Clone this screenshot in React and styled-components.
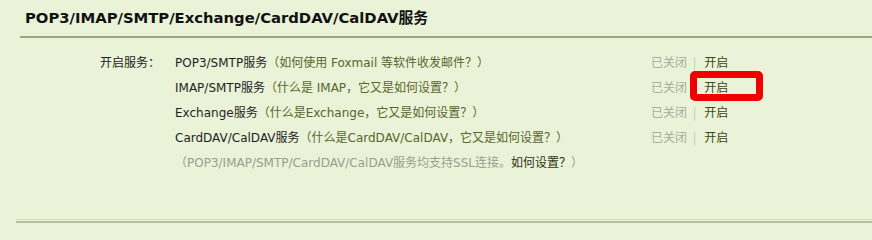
import React from 'react';
import styled, { createGlobalStyle } from 'styled-components';

const GlobalStyle = createGlobalStyle`
  html, body {
    margin: 0;
    padding: 0;
    background: #eaf2d8;
  }
  body {
    font-family: "DejaVu Sans", "Noto Sans CJK SC", sans-serif;
    font-size: 12px;
    color: #222;
  }
`;

const Panel = styled.section`
  width: 872px;
  height: 226px;
  box-sizing: border-box;
  overflow: hidden;
`;

const Title = styled.h2`
  margin: 0 0 0 20px;
  padding: 8px 0 8px 5px;
  height: 20px;
  line-height: 20px;
  font-family: "DejaVu Sans", "Noto Sans CJK SC", sans-serif;
  font-size: 14.8px;
  font-weight: bold;
  color: #111;
  border-bottom: 2px solid #9ca682;
`;

const Settings = styled.div`
  display: grid;
  grid-template-columns: 75px 476px auto;
  grid-auto-rows: 25px;
  align-items: center;
  margin: 11px 0 0 100px;
  height: 170px;
`;

const Label = styled.div`
  grid-column: 1;
  font-family: "Noto Sans CJK SC", sans-serif;
  color: #222;
`;

const Service = styled.div`
  grid-column: 2;
  white-space: nowrap;
  color: ${(p) => (p.$muted ? '#9a9f8c' : '#1f1f1f')};
`;

const Help = styled.span`
  color: ${(p) => (p.$strong ? '#2d3414' : '#59662c')};
`;

const Status = styled.div`
  grid-column: 3;
  display: flex;
  align-items: center;
  font-family: "Noto Sans CJK SC", sans-serif;
`;

const Closed = styled.span`
  color: #a9ad9c;
`;

const Divider = styled.span`
  color: #c3c8b4;
  margin: 0 8px 0 6px;
`;

const Toggle = styled.a`
  position: relative;
  color: #3d4719;
  text-decoration: none;
  cursor: pointer;

  ${(p) =>
    p.$marked &&
    `
    &::after {
      content: '';
      position: absolute;
      left: -14px;
      top: -7px;
      width: 73px;
      height: 30px;
      box-sizing: border-box;
      border: 7px solid #f00000;
      border-radius: 5px;
    }
  `}
`;

const Footer = styled.div`
  margin-left: 16px;
  border-top: 1px solid #d3dcbc;
  padding-top: 1px;

  &::after {
    content: '';
    display: block;
    border-top: 2px solid #b5bea0;
  }
`;

const services = [
  {
    name: 'POP3/SMTP服务',
    help: '（如何使用 Foxmail 等软件收发邮件？）',
  },
  {
    name: 'IMAP/SMTP服务',
    help: '（什么是 IMAP，它又是如何设置？）',
    marked: true,
  },
  {
    name: 'Exchange服务',
    help: '（什么是Exchange，它又是如何设置？）',
  },
  {
    name: 'CardDAV/CalDAV服务',
    help: '（什么是CardDAV/CalDAV，它又是如何设置？）',
  },
];

const App = () => {
  return (
    <Panel>
      <GlobalStyle />
      <Title>POP3/IMAP/SMTP/Exchange/CardDAV/CalDAV服务</Title>
      <Settings>
        <Label>开启服务：</Label>
        {services.map((s, i) => (
          <React.Fragment key={s.name}>
            {i > 0 && <Label />}
            <Service>
              {s.name}
              <Help>{s.help}</Help>
            </Service>
            <Status>
              <Closed>已关闭</Closed>
              <Divider>|</Divider>
              <Toggle $marked={s.marked}>开启</Toggle>
            </Status>
          </React.Fragment>
        ))}
        <Label />
        <Service $muted>
          （POP3/IMAP/SMTP/CardDAV/CalDAV服务均支持SSL连接。<Help $strong>如何设置？</Help>）
        </Service>
      </Settings>
      <Footer />
    </Panel>
  );
};

export default App;
